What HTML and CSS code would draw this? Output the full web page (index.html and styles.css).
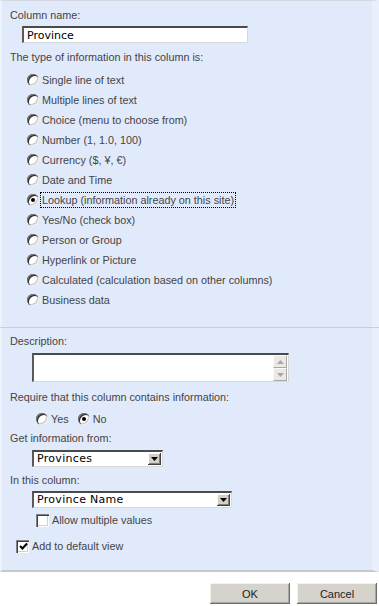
FILE: index.html
```
<!DOCTYPE html>
<html>
<head>
<meta charset="utf-8">
<link rel="stylesheet" href="styles.css">
</head>
<body>
<div class="panel">
  <div class="lbl">Column name:</div>
  <div class="textbox">Province</div>
  <div class="lbl gap7">The type of information in this column is:</div>
  <ul class="types">
    <li><span class="radio"></span><span class="opt">Single line of text</span></li>
    <li><span class="radio"></span><span class="opt">Multiple lines of text</span></li>
    <li><span class="radio"></span><span class="opt">Choice (menu to choose from)</span></li>
    <li><span class="radio"></span><span class="opt">Number (1, 1.0, 100)</span></li>
    <li><span class="radio"></span><span class="opt">Currency ($, ¥, €)</span></li>
    <li><span class="radio"></span><span class="opt">Date and Time</span></li>
    <li><span class="radio on"></span><span class="opt focus">Lookup (information already on this site)</span></li>
    <li><span class="radio"></span><span class="opt">Yes/No (check box)</span></li>
    <li><span class="radio"></span><span class="opt">Person or Group</span></li>
    <li><span class="radio"></span><span class="opt">Hyperlink or Picture</span></li>
    <li><span class="radio"></span><span class="opt">Calculated (calculation based on other columns)</span></li>
    <li><span class="radio"></span><span class="opt">Business data</span></li>
  </ul>
  <div class="divider"></div>
  <div class="lbl gap6">Description:</div>
  <div class="textarea">
    <div class="vscroll">
      <div class="sbtn"><svg width="7" height="4" viewBox="0 0 7 4"><path d="M0 4 L3.5 0 L7 4 Z" fill="#a8a8a8"/></svg></div>
      <div class="sbtn"><svg width="7" height="4" viewBox="0 0 7 4"><path d="M0 0 L3.5 4 L7 0 Z" fill="#a8a8a8"/></svg></div>
    </div>
  </div>
  <div class="lbl gap8">Require that this column contains information:</div>
  <div class="yesno">
    <span class="radio"></span><span class="opt">Yes</span>
    <span class="radio on second"></span><span class="opt">No</span>
  </div>
  <div class="lbl gap2">Get information from:</div>
  <div class="select s1"><span class="val">Provinces</span><span class="dd"><svg width="7" height="4" viewBox="0 0 7 4"><path d="M0 0 L3.5 4 L7 0 Z" fill="#000"/></svg></span></div>
  <div class="lbl gap6">In this column:</div>
  <div class="select s2"><span class="val">Province Name</span><span class="dd"><svg width="7" height="4" viewBox="0 0 7 4"><path d="M0 0 L3.5 4 L7 0 Z" fill="#000"/></svg></span></div>
  <div class="check multi"><span class="box"></span><span class="opt">Allow multiple values</span></div>
  <div class="check deflt"><span class="box"><svg width="9" height="9" viewBox="0 0 9 9"><path d="M1 4 L3.5 6.5 L8 1.5" fill="none" stroke="#000" stroke-width="2"/></svg></span><span class="opt">Add to default view</span></div>
</div>
<div class="buttons">
  <button class="btn">OK</button>
  <button class="btn">Cancel</button>
</div>
</body>
</html>
```
FILE: styles.css
```
html, body {
  margin: 0;
  padding: 0;
  background: #fff;
}
body {
  width: 379px;
  height: 606px;
  overflow: hidden;
  font-family: "Liberation Sans", Arial, sans-serif;
  font-size: 10.8px;
  color: #444;
}
.panel {
  background: #e1eafb;
  border-top: 1px solid #d3d8e0;
  border-left: 2px solid #eef2fa;
  border-right: 7px solid #e9effc;
  border-bottom: 2px solid #c6c8cc;
  padding: 7px 0 14px 8px;
}
.lbl {
  line-height: 14px;
  height: 14px;
  white-space: nowrap;
}
.gap8 { margin-top: 8px; }
.gap7 { margin-top: 7px; }
.gap6 { margin-top: 6px; }
.gap5 { margin-top: 5px; }
.gap2 { margin-top: 2px; }
.textbox {
  margin: 4px 0 0 12px;
  width: 220px;
  height: 14px;
  background: #fff;
  border-top: 2px solid #4a4a4a;
  border-left: 2px solid #5a5a5a;
  border-right: 1px solid #d8d8d8;
  border-bottom: 1px solid #d8d8d8;
  padding-left: 3px;
  font-family: "DejaVu Sans", Verdana, sans-serif;
  font-size: 11px;
  line-height: 15px;
  color: #000;
}
.types {
  list-style: none;
  margin: 6px 0 0 17px;
  padding: 0;
}
.types li {
  height: 20px;
  display: flex;
  align-items: center;
}
.radio {
  flex: none;
  display: inline-block;
  position: relative;
  width: 12px;
  height: 12px;
  border-radius: 50%;
  background: #fff;
  box-shadow: inset 1px 1px 0 #7c7c7c, inset 2px 2px 0 #2e2e2e, inset -1px -1px 0 #f4f4f4, inset -2px -2px 0 #c8c8c8;
}
.radio.on::after {
  content: "";
  position: absolute;
  left: 4px;
  top: 4px;
  width: 4px;
  height: 4px;
  border-radius: 50%;
  background: #000;
}
.opt {
  margin-left: 3px;
  line-height: 14px;
  white-space: nowrap;
}
.opt.focus {
  outline: 1px dotted #000;
  outline-offset: 0;
  padding: 0 1px;
  margin-left: 2px;
}
.divider {
  margin: 17px 0 0 -10px;
  height: 1px;
  background: #c9ced8;
  width: 386px;
}
.textarea {
  margin: 5px 0 0 22px;
  width: 254px;
  height: 26px;
  background: #fff;
  border-top: 2px solid #4a4a4a;
  border-left: 2px solid #5a5a5a;
  border-right: 1px solid #d8d8d8;
  border-bottom: 1px solid #d8d8d8;
  display: flex;
  justify-content: flex-end;
}
.vscroll {
  width: 14px;
  margin: 0 1px 0 0;
  display: flex;
  flex-direction: column;
}
.sbtn {
  flex: 1;
  background: #ebe9e4;
  border: 1px solid;
  border-color: #fafafa #a8a8a8 #a8a8a8 #fafafa;
  display: flex;
  align-items: center;
  justify-content: center;
}
.yesno {
  margin: 5px 0 0 26px;
  height: 20px;
  display: flex;
  align-items: center;
}
.yesno .second {
  margin-left: 9px;
}
.select {
  margin: 5px 0 0 22px;
  height: 14px;
  background: #fff;
  border-top: 2px solid #4a4a4a;
  border-left: 2px solid #5a5a5a;
  border-right: 1px solid #d8d8d8;
  border-bottom: 1px solid #d8d8d8;
  display: flex;
  align-items: center;
  justify-content: space-between;
  font-family: "DejaVu Sans", Verdana, sans-serif;
  font-size: 11px;
  color: #000;
}
.s1 { width: 128px; }
.s2 { width: 197px; margin-top: 4px; }
.val {
  padding-left: 3px;
  line-height: 14px;
  letter-spacing: 0.3px;
}
.dd {
  width: 13px;
  height: 12px;
  margin-right: 1px;
  background: #d4d0c8;
  box-shadow: inset -1px -1px 0 #404040, inset 1px 1px 0 #fff, inset -2px -2px 0 #808080;
  display: flex;
  align-items: center;
  justify-content: center;
}
.check {
  height: 20px;
  display: flex;
  align-items: center;
}
.check.multi {
  margin: 2px 0 0 26px;
}
.check.deflt {
  margin: 6px 0 0 6px;
}
.box {
  flex: none;
  width: 13px;
  height: 13px;
  background: #fff;
  box-shadow: inset 1px 1px 0 #808080, inset 2px 2px 0 #404040, inset -1px -1px 0 #fff, inset -2px -2px 0 #d4d0c8;
  display: flex;
  align-items: center;
  justify-content: center;
}
.box svg {
  margin: 1px 0 0 1px;
}
.buttons {
  margin-top: 11px;
  display: flex;
  justify-content: flex-end;
  gap: 7px;
  padding-right: 2px;
}
.btn {
  width: 80px;
  height: 21px;
  padding: 0;
  margin: 0;
  border: none;
  background: #d6d3cc;
  box-shadow: inset -1px -1px 0 #6e6e6e, inset 1px 1px 0 #f4f3f0, inset -2px -2px 0 #a8a6a0;
  font-family: "Liberation Sans", Arial, sans-serif;
  font-size: 11px;
  color: #222;
}
```
